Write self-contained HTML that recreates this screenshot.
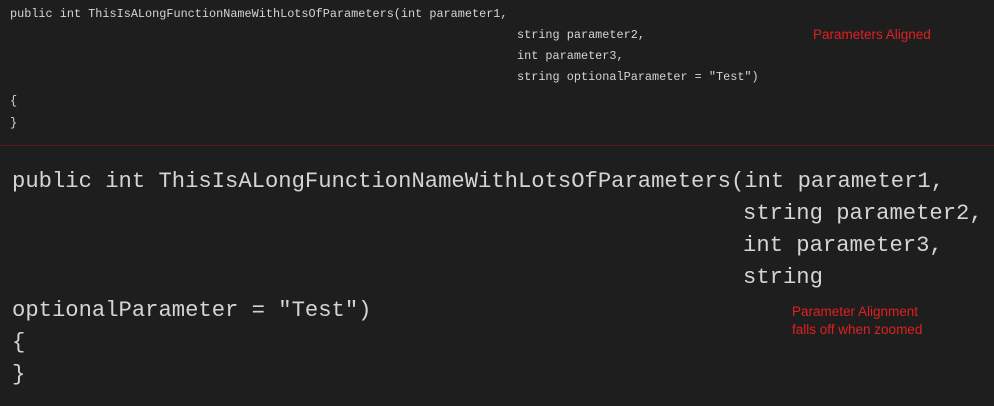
<!DOCTYPE html>
<html><head><meta charset="utf-8"><style>
html,body{margin:0;padding:0;background:#1e1e1e;width:994px;height:406px;overflow:hidden;position:relative}
.l{position:absolute;white-space:pre;color:#d4d4d4;font-family:"Liberation Mono",monospace}
.s{font-size:11.85px;line-height:14px}
.b{font-size:22.2px;line-height:26px}
.r{position:absolute;color:#e02020;font-family:"Liberation Sans",sans-serif;font-size:13.5px;line-height:18px;white-space:pre}
.sep{position:absolute;left:0;top:145px;width:994px;height:1px;background:#5a1818}
</style></head><body>
<div class="l s" style="left:10px;top:7px">public int ThisIsALongFunctionNameWithLotsOfParameters(int parameter1,</div>
<div class="l s" style="left:517px;top:28px">string parameter2,</div>
<div class="l s" style="left:517px;top:49px">int parameter3,</div>
<div class="l s" style="left:517px;top:70px">string optionalParameter = "Test")</div>
<div class="l s" style="left:10px;top:94px">{</div>
<div class="l s" style="left:10px;top:116px">}</div>
<div class="r" style="left:813px;top:26px">Parameters Aligned</div>
<div class="sep"></div>
<div class="l b" style="left:12px;top:169px">public int ThisIsALongFunctionNameWithLotsOfParameters(int parameter1,</div>
<div class="l b" style="left:743px;top:201px">string parameter2,</div>
<div class="l b" style="left:743px;top:233px">int parameter3,</div>
<div class="l b" style="left:743px;top:265px">string</div>
<div class="l b" style="left:12px;top:298px">optionalParameter = "Test")</div>
<div class="l b" style="left:12px;top:330px">{</div>
<div class="l b" style="left:12px;top:362px">}</div>
<div class="r" style="left:792px;top:303px">Parameter Alignment
falls off when zoomed</div>
</body></html>
